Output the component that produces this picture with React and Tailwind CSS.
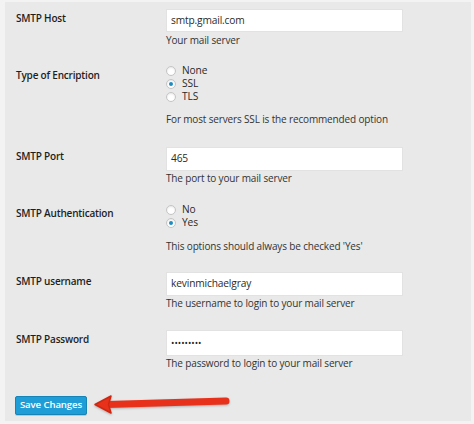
import React from "react";

const font = { fontFamily: '"Open Sans", "Liberation Sans", sans-serif' };

function Label({ children, mt }) {
  return (
    <div className={`w-[161px] shrink-0 pl-[11px] text-[10px] tracking-[-0.2px] leading-[14px] font-semibold text-[#1e1e1e] ${mt}`}>
      {children}
    </div>
  );
}

function Desc({ children, mt = "" }) {
  return <div className={`text-[10px] tracking-[-0.15px] leading-[14px] text-[#333] ${mt}`}>{children}</div>;
}

function TextInput({ value, h = "h-[24px]", dots }) {
  return (
    <div className={`w-[237px] ${h} bg-white border border-[#e2e2e2] flex items-center pl-[4px] text-[10.2px] tracking-[-0.15px] text-[#2a2a2a]`}>
      {dots ? <span className="text-[9px] tracking-[0px] text-[#222]">{value}</span> : value}
    </div>
  );
}

function Radio({ label, checked }) {
  return (
    <div className="h-[13px] flex items-center gap-[6px] text-[10.2px] tracking-[-0.1px] leading-[13px] text-[#2a2a2a]">
      <span className="w-[10px] h-[10px] shrink-0 rounded-full bg-white border border-[#c4c4c4] flex items-center justify-center shadow-[inset_0_1px_2px_rgba(0,0,0,0.1)]">
        {checked && <span className="w-[4px] h-[4px] rounded-full bg-[#1e8cbe]" />}
      </span>
      <span>{label}</span>
    </div>
  );
}

export default function App() {
  return (
    <div className="w-[474px] h-[424px] bg-[#f3f3f3] pl-[5px] pt-[2px] pr-[3px] pb-[3px]" style={font}>
      <div className="w-full h-full bg-[#e9e9e9] pt-[7px]">
        {/* SMTP Host */}
        <div className="flex items-start">
          <Label mt="mt-[2px]">SMTP Host</Label>
          <div>
            <TextInput value="smtp.gmail.com" h="h-[23px]" />
            <Desc mt="mt-[1px]">Your mail server</Desc>
          </div>
        </div>

        {/* Encryption */}
        <div className="flex items-start mt-[17px]">
          <Label mt="mt-[4px]">Type of Encription</Label>
          <div>
            <Radio label="None" />
            <Radio label="SSL" checked />
            <Radio label="TLS" />
            <Desc mt="mt-[9px]">For most servers SSL is the recommended option</Desc>
          </div>
        </div>

        {/* Port */}
        <div className="flex items-start mt-[21px]">
          <Label mt="mt-[2px]">SMTP Port</Label>
          <div>
            <TextInput value="465" />
            <Desc>The port to your mail server</Desc>
          </div>
        </div>

        {/* Auth */}
        <div className="flex items-start mt-[18px]">
          <Label mt="mt-[3px]">SMTP Authentication</Label>
          <div>
            <Radio label="No" />
            <Radio label="Yes" checked />
            <Desc mt="mt-[10px]">This options should always be checked 'Yes'</Desc>
          </div>
        </div>

        {/* Username */}
        <div className="flex items-start mt-[19px]">
          <Label mt="mt-[2px]">SMTP username</Label>
          <div>
            <TextInput value="kevinmichaelgray" />
            <Desc>The username to login to your mail server</Desc>
          </div>
        </div>

        {/* Password */}
        <div className="flex items-start mt-[20px]">
          <Label mt="mt-[2px]">SMTP Password</Label>
          <div>
            <TextInput value="•••••••••" h="h-[26px]" dots />
            <Desc>The password to login to your mail server</Desc>
          </div>
        </div>

        {/* Save */}
        <div className="flex items-center mt-[22px] pl-[10px]">
          <button className="w-[72px] h-[19px] bg-[#1e9dd6] border border-[#1784b8] rounded-[2px] text-white text-[9.6px] tracking-[-0.1px] font-semibold leading-none shadow-[0_1px_0_rgba(0,0,0,0.15)]">
            Save Changes
          </button>
          <svg width="140" height="26" viewBox="0 0 140 26" className="ml-[5px]" style={{ filter: "drop-shadow(0 1px 1px rgba(0,0,0,0.25))" }}>
            <line x1="15" y1="12.5" x2="134" y2="9" stroke="#e8311b" strokeWidth="7" strokeLinecap="round" />
            <polygon points="3,12.5 19,4 16.5,12.5 19,21" fill="#e8311b" stroke="#d0260f" strokeWidth="1.5" strokeLinejoin="round" />
          </svg>
        </div>
      </div>
    </div>
  );
}
